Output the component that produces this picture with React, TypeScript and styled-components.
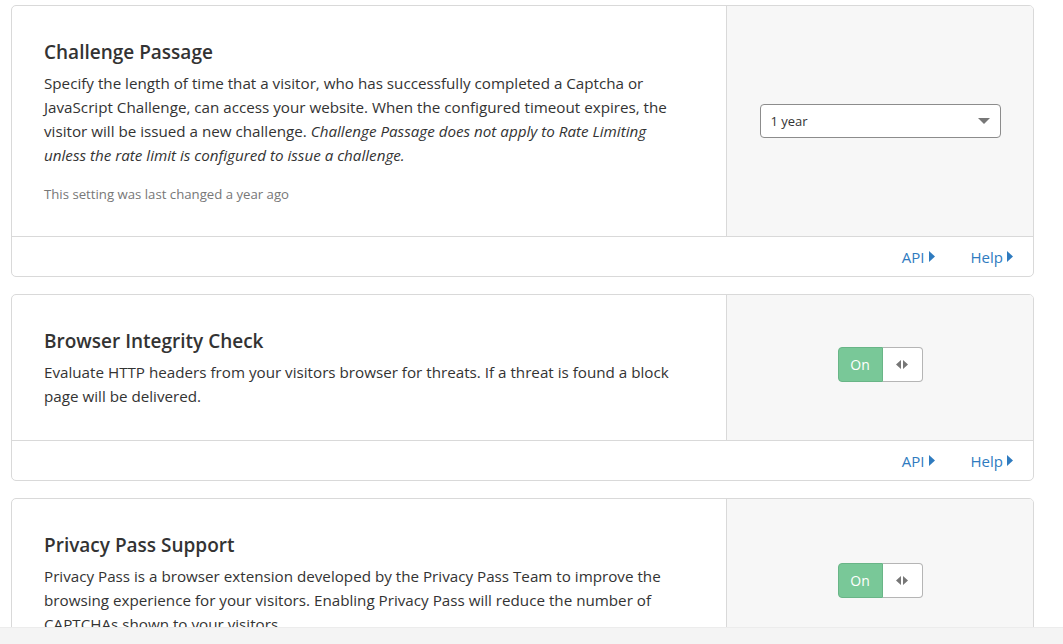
import React from "react";
import styled, { createGlobalStyle } from "styled-components";

const Global = createGlobalStyle`
  html, body { margin: 0; padding: 0; background: #fff; }
  body { font-family: "Open Sans", "Noto Sans", sans-serif; color: #333; overflow: hidden; }
  * { box-sizing: border-box; }
`;

const Page = styled.div`
  padding: 5px 29px 0 11px;
  display: flex;
  flex-direction: column;
  gap: 17px;
`;

const Card = styled.section`
  border: 1px solid #d9d9d9;
  border-radius: 5px;
  background: #fff;
  overflow: hidden;
`;

const Body = styled.div`
  display: flex;
`;

const Main = styled.div`
  flex: 1;
  padding: 34px 32px 32px 32px;
`;

const Side = styled.div`
  width: 307px;
  flex: none;
  background: #f7f7f7;
  border-left: 1px solid #d9d9d9;
  display: flex;
  align-items: center;
  justify-content: center;
`;

const Title = styled.h3`
  margin: 0 0 7px;
  font-size: 19px;
  line-height: 24px;
  font-weight: 600;
  color: #333;
`;

const Desc = styled.p`
  margin: 0;
  font-size: 15.2px;
  line-height: 24px;
  color: #333;
  max-width: 640px;
  em { font-style: italic; }
`;

const Meta = styled.div`
  margin-top: 17px;
  font-size: 13.2px;
  line-height: 20px;
  color: #777;
`;

const Footer = styled.div`
  border-top: 1px solid #d9d9d9;
  height: 40px;
  display: flex;
  align-items: center;
  justify-content: flex-end;
  gap: 36px;
  padding-right: 20px;
`;

const Link = styled.a`
  color: #2f7bbf;
  font-size: 15px;
  text-decoration: none;
  display: inline-flex;
  align-items: center;
  gap: 4px;
  cursor: pointer;
`;

const Select = styled.div`
  width: 241px;
  height: 34px;
  border: 1px solid #8c8c8c;
  border-radius: 4px;
  background: #fff;
  display: flex;
  align-items: center;
  justify-content: space-between;
  padding: 0 10px 0 10px;
  font-size: 13px;
  color: #333;
`;

const Toggle = styled.div`
  display: flex;
  height: 35px;
  margin-top: -6px;
`;

const ToggleOn = styled.div`
  width: 45px;
  background: #79c898;
  border: 1px solid #69b587;
  border-radius: 4px 0 0 4px;
  color: #fff;
  font-size: 14px;
  display: flex;
  align-items: center;
  justify-content: center;
`;

const ToggleKnob = styled.div`
  width: 40px;
  background: #fff;
  border: 1px solid #b5b5b5;
  border-left: none;
  border-radius: 0 4px 4px 0;
  display: flex;
  align-items: center;
  justify-content: center;
`;

const BottomBar = styled.div`
  position: fixed;
  left: 0;
  right: 0;
  bottom: 0;
  height: 17px;
  background: #f4f4f4;
  border-top: 1px solid #ececec;
`;

const Caret = () => (
  <svg width="12" height="7" viewBox="0 0 12 7"><path d="M0 0h12L6 6z" fill="#777" /></svg>
);

const ArrowRight = () => (
  <svg width="6" height="11" viewBox="0 0 6 11"><path d="M0 0l6 5.5L0 11z" fill="#2f7bbf" /></svg>
);

const Arrows = () => (
  <svg width="12" height="9" viewBox="0 0 12 9"><path d="M5 0v9L0 4.5z M7 0v9l5-4.5z" fill="#777" /></svg>
);

const Links = () => (
  <Footer>
    <Link>API <ArrowRight /></Link>
    <Link>Help <ArrowRight /></Link>
  </Footer>
);

const OnSwitch = () => (
  <Toggle>
    <ToggleOn>On</ToggleOn>
    <ToggleKnob><Arrows /></ToggleKnob>
  </Toggle>
);

export default function App() {
  return (
    <>
      <Global />
      <Page>
        <Card>
          <Body>
            <Main>
              <Title>Challenge Passage</Title>
              <Desc>
                Specify the length of time that a visitor, who has successfully completed a Captcha or
                JavaScript Challenge, can access your website. When the configured timeout expires, the
                visitor will be issued a new challenge.{" "}
                <em>Challenge Passage does not apply to Rate Limiting unless the rate limit is configured to issue a challenge.</em>
              </Desc>
              <Meta>This setting was last changed a year ago</Meta>
            </Main>
            <Side>
              <Select>
                <span>1 year</span>
                <Caret />
              </Select>
            </Side>
          </Body>
          <Links />
        </Card>
        <Card>
          <Body>
            <Main>
              <Title>Browser Integrity Check</Title>
              <Desc>
                Evaluate HTTP headers from your visitors browser for threats. If a threat is found a block
                page will be delivered.
              </Desc>
            </Main>
            <Side>
              <OnSwitch />
            </Side>
          </Body>
          <Links />
        </Card>
        <Card>
          <Body>
            <Main>
              <Title>Privacy Pass Support</Title>
              <Desc>
                Privacy Pass is a browser extension developed by the Privacy Pass Team to improve the
                browsing experience for your visitors. Enabling Privacy Pass will reduce the number of
                CAPTCHAs shown to your visitors.
              </Desc>
            </Main>
            <Side>
              <OnSwitch />
            </Side>
          </Body>
          <Links />
        </Card>
      </Page>
      <BottomBar />
    </>
  );
}
